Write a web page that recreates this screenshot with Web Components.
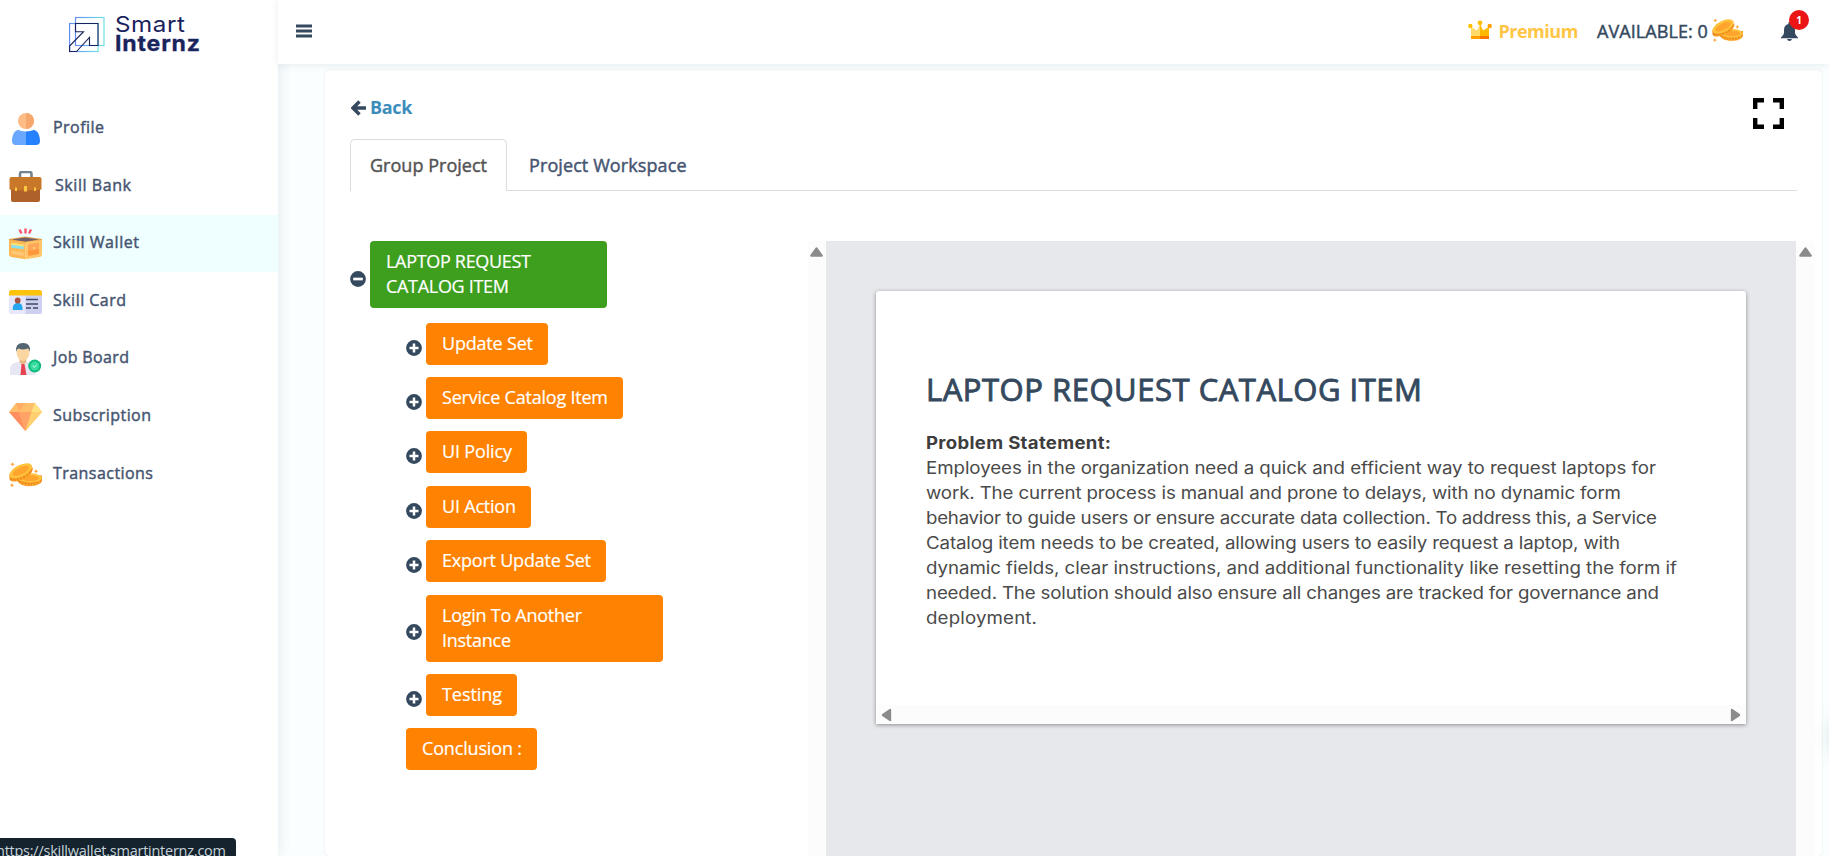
<!DOCTYPE html>
<html lang="en"><head><meta charset="utf-8"><title>Smart Internz</title>
<style>
html,body{margin:0;height:856px;overflow:hidden;background:#fff}
body{font-family:"Open Sans","Noto Sans",sans-serif;color:#34495e}
</style></head><body>
<skill-app></skill-app>
<script>
const define=(name,css,html,ready)=>customElements.define(name,class extends HTMLElement{
  connectedCallback(){
    if(this.shadowRoot)return;
    const t=document.createElement('template');
    t.innerHTML=`<style>*{box-sizing:border-box}${css}</style>${typeof html==='function'?html(this):html}`;
    this.attachShadow({mode:'open'}).append(t.content.cloneNode(true));
    if(ready)ready(this);
  }
});

/* One line of text, tracked so that it fills the width given in w; stretch widens the glyphs first. */
define('fit-line',':host{display:block;white-space:nowrap;width:max-content}span{display:inline-block;transform-origin:0 50%}','<span><slot></slot></span>',el=>{
  const s=el.shadowRoot.querySelector('span'),k=+(el.getAttribute('stretch')||1),w=+el.getAttribute('w')/k,n=el.textContent.length;
  s.style.letterSpacing=((w-s.getBoundingClientRect().width)/(n-1))+'px';
  if(k!==1)s.style.transform=`scaleX(${k})`;
});

const coins=`<svg viewBox="0 0 33 26"><g><path d="M9 13.5h24v5.2q-1 4.600-12 5.300-10.500-.3-12.200-4.800z" fill="#f18b1c"/><path d="M12 20v2m3-1v2.500m3-2v3m3-3v3m3-3v2.600m3-3.500v3m3-5v3.500" stroke="#ffb632" stroke-width="1.200"/><ellipse cx="21" cy="16" rx="12" ry="4.700" fill="#ffc23d"/><ellipse cx="21" cy="16.200" rx="9" ry="2.900" fill="#ffa52d"/><path d="M.3 12.500l.3 5c1 2.400 7 3 14-1 7-3.500 9.500-7 9.200-11z" fill="#f18b1c"/><path d="M4 17.500v2m3-2.200.5 2m2.500-3 1 2.400m2-4 1 2.300m2-4.200 1.200 2m1.400-4 1.200 1.600" stroke="#ffb632" stroke-width="1.200"/><ellipse cx="11.800" cy="8.800" rx="12.300" ry="5.900" transform="rotate(-27 11.800 8.800)" fill="#ffc23d"/><ellipse cx="11.800" cy="8.900" rx="9" ry="3.500" transform="rotate(-27 11.800 8.900)" fill="#ffa52d"/><path d="M3.500.2l.7 1.400 1.500.7-1.500.7-.7 1.500-.7-1.500-1.500-.7 1.500-.7zM27 7l.7 1.500 1.500.7-1.500.7-.7 1.500-.7-1.500-1.500-.7 1.500-.7zM3 21l.7 1.500 1.500.7-1.500.7L3 25.400l-.7-1.500-1.500-.7 1.500-.7z" fill="#ffa23a"/></g></svg>`;
const icons={
profile:`<svg viewBox="0 0 28 32"><path d="M14 16C11 14.500 6 16 3.500 18.200 1 20 0 25 0 28q0 4 4 4h10z" fill="#6aa7ff"/><path d="M14 16c3-1.500 8 0 10.500 2.200C27 20 28 25 28 28q0 4-4 4H14z" fill="#2681ff"/><path d="M5 16.500Q14 12 23 16.500 14 20.500 5 16.500" fill="#fff"/><circle cx="14" cy="8" r="8" fill="#ffbb85"/><path d="M14 0a8 8 0 0 1 0 16z" fill="#f6a76c"/></svg>`,
bank:`<svg viewBox="0 0 33 31"><path d="M11 7V3q0-2 2-2h7.500q2 0 2 2v4" fill="none" stroke="#75838e" stroke-width="2.600"/><path d="M2 16h29v13q0 2-2 2H4q-2 0-2-2z" fill="#ae6128"/><path d="M2.500 6h28q2 0 2 2v10.500q-10 1-16 1T.5 18.500V8q0-2 2-2z" fill="#c87828"/><path d="M6 16.500h2v3.500H6zm9-1.500h3v5.500h-3zm10 1.500h2v3.500h-2z" fill="#ffc73e"/></svg>`,
wallet:`<svg viewBox="0 0 33 32"><path d="M10.500 1.500l2 4m4-5v5m5.500-4-2 4" stroke="#ff5364" stroke-width="2.300"/><path d="M0 11l16-2.500L33 11v3L16 16 0 14z" fill="#e6a04b"/><path d="M3 11.500l13-2 14 2-14 2.200z" fill="#71606a"/><path d="M0 12l16.500 2v17.200L2 29Q0 28.500 0 26z" fill="#ffb755"/><path d="M16.500 14L33 12v14q0 2.500-2 3l-14.500 2.200z" fill="#ffc568"/><path d="M2.300 15.500l12.400 1.600v4.200L2.300 19.700z" fill="#89e0ef"/><path d="M2.300 14.800l12.400 1.600v2L2.300 16.700z" fill="#ffe36e"/><path d="M2.500 22.500l12 1.800V28l-12-2z" fill="#ffc879"/><path d="M19 17.500q0-1.200 1.500-1.400l9.500-1.400v11l-9.500 2q-1.500-.1-1.500-2z" fill="#ffa65a"/><path d="M19 22q5 1.500 11-1v4.700l-9.500 2q-1.500-.1-1.500-2z" fill="#ff9838"/><circle cx="25" cy="20" r="1" fill="#ffe36e"/></svg>`,
card:`<svg viewBox="0 0 33 24"><rect width="33" height="24" rx="2.500" fill="#e6e7fa"/><path d="M16.500 5H33v17q0 2-2.500 2h-14z" fill="#cfcff2"/><path d="M2.500 0h28Q33 0 33 2.500V5.500H0V2.500Q0 0 2.500 0z" fill="#ffc20d"/><path d="M3.800 20v-2.500q.5-4.500 5-4.500t4.700 4.500V20z" fill="#26a6ef"/><circle cx="8.700" cy="10.500" r="2.900" fill="#ab5140"/><path d="M17 9.500h12M17 14h12M17 18h5m2 0h5" stroke="#3f4d62" stroke-width="1.700"/></svg>`,
job:`<svg viewBox="0 0 33 32"><path d="M1 32v-7q1-5.500 9-6h7q8 .6 9.500 6v7z" fill="#e6e7f2"/><path d="M10.500 14h6.800v5.500l-3.400 2.300-3.400-2.300z" fill="#e9b985"/><path d="M7.500 9q0-6 6.500-6t6.500 6q0 7-6.500 9-6.500-2-6.500-9z" fill="#fbd5a2"/><path d="M7 9Q6 0 14 0t7 9q-1-3.500-2.500-3.500-4.500 2-9 0Q7.500 6 7 9z" fill="#526674"/><path d="M12.500 21h3l2 11h-6z" fill="#e64350"/><circle cx="25.700" cy="23" r="6.500" fill="#13ba7c"/><circle cx="25.700" cy="23" r="4.500" fill="#35dca0"/><path d="M23.700 23l1.500 1.300 2.500-2.400" fill="none" stroke="#fff" stroke-width=".9"/></svg>`,
gem:`<svg viewBox="0 0 33 28"><path d="M7 0h19l7 9-16.500 19L0 9z" fill="#ffbf69"/><path d="M0 9h10l6.500 19z" fill="#ff8f61"/><path d="M10 9h12.500l-6 19z" fill="#ffa466"/><path d="M22.500 9H33L16.500 28z" fill="#ffd070"/><path d="M7 0l3 9 6.500-9z" fill="#ffac65"/><path d="M26 0l-3.500 9L33 9z" fill="#ffe27f"/></svg>`,
coins};
const mark={
plus:`<svg width="16" height="16" viewBox="0 0 16 16"><circle cx="8" cy="8" r="7.900" fill="#34495e"/><path d="M8 3.500v9M3.500 8h9" stroke="#fff" stroke-width="2.500"/></svg>`,
minus:`<svg width="16" height="16" viewBox="0 0 16 16"><circle cx="8" cy="8" r="7.900" fill="#34495e"/><path d="M3.200 8h9.600" stroke="#fff" stroke-width="2.700"/></svg>`};

define('nav-item',`:host{display:flex;height:57.600px;align-items:center;padding-left:9px;font-size:16px;-webkit-text-stroke:.45px;color:#465571;line-height:24px}
 :host([active]){background:#efffff}
 i{display:flex;width:33px;height:33px;justify-content:center;align-items:center;margin:1.400px 11px 0 0}
 fit-line{margin-top:-2.800px}svg{display:block}`,
 e=>{const k=e.getAttribute('icon'),s={profile:[28,32],bank:[33,31],wallet:[33,32],card:[33,24],job:[33,32],gem:[33,28],coins:[33,26]}[k];
 return `<i>${icons[k].replace('<svg','<svg width="'+s[0]+'" height="'+s[1]+'"')}</i><fit-line w="${e.getAttribute('w')}" style="padding-left:${k==='bank'?2:0}px">${e.getAttribute('label')}</fit-line>`});

define('brand-logo',`:host{display:flex;height:99.600px;padding:16px 0 0 69px}svg{margin-right:10px;flex:none}
 .n{font:400 22px/18px Inter,sans-serif;color:#1a245c;margin-top:-1px}b{font-weight:700;-webkit-text-stroke:.3px}fit-line{height:18px}.s{margin-bottom:1px}`,
 `<svg width="36" height="37" viewBox="0 0 36 37" fill="none"><defs><linearGradient id="g"><stop stop-color="#648cf5"/><stop offset="1" stop-color="#70e0e4"/></linearGradient></defs><rect x="6.500" y="1.500" width="28.500" height="28" stroke="url(#g)" stroke-width="1.200"/><rect x=".6" y="7.500" width="28.500" height="28" stroke="url(#g)" stroke-width="1.200"/><path d="M6.500 15.700V7.500H29v22h-8.500V21.300L7.500 35.500H.6V30L14.500 15.700z" stroke="#1a245c" stroke-width="1.100"/></svg>
 <div class="n"><fit-line class="s" w="70" stretch="1.1">Smart</fit-line><fit-line w="85" stretch="1.050"><b>Internz</b></fit-line></div>`);

define('side-bar',`:host{display:block;width:278px;background:#fff;box-shadow:0 0 14px rgba(50,80,90,.12);z-index:1}`,
 `<brand-logo></brand-logo><nav>
 <nav-item icon="profile" label="Profile" w="51"></nav-item>
 <nav-item icon="bank" label="Skill Bank" w="76"></nav-item>
 <nav-item icon="wallet" label="Skill Wallet" w="86" active></nav-item>
 <nav-item icon="card" label="Skill Card" w="73"></nav-item>
 <nav-item icon="job" label="Job Board" w="76"></nav-item>
 <nav-item icon="gem" label="Subscription" w="98"></nav-item>
 <nav-item icon="coins" label="Transactions" w="100"></nav-item></nav>`);

define('top-bar',`:host{display:flex;height:64px;background:#fff;align-items:center;padding:0 31px 2px 18px;font-size:18px;line-height:24px;position:relative;z-index:1;box-shadow:0 1px 8px rgba(50,80,90,.1)}
 .sp{flex:1}.p{color:#ffc645;font-weight:700;margin:0 19px 0 6px}.a{-webkit-text-stroke:.45px;margin-right:4px}svg{display:block}
 .bell{position:relative;margin:1px 0 0 38px}.badge{position:absolute;left:8px;top:-12px;width:20px;height:20px;border-radius:50%;background:#ec1515;color:#fff;font:700 10px/20px "Open Sans";text-align:center}`,
 `<svg width="16" height="14" viewBox="0 0 16 14" style="margin-top:-1px"><path d="M0 2h16M0 7h16M0 12h16" stroke="#34495e" stroke-width="2.800"/></svg><span class="sp"></span>
 <svg width="24" height="20" viewBox="0 0 24 20" style="margin-top:-3px"><path d="M3 7l6 3.500L12 4l3 6.500L21 7v12H3z" fill="#ffda68"/><path d="M12 4l3 6.500L21 7v12h-9z" fill="#ffb900"/><path d="M3 16h9v3H3z" fill="#ff9f00"/><path d="M12 16h9v3h-9z" fill="#fc7500"/><circle cx="2.300" cy="6" r="2.200" fill="#ffc000"/><circle cx="12" cy="2.800" r="2.400" fill="#ffc000"/><circle cx="21.700" cy="6" r="2.200" fill="#ffa000"/></svg>
 <fit-line class="p" w="80">Premium</fit-line><fit-line class="a" w="111">AVAILABLE: 0</fit-line>
 ${coins.replace('<svg','<svg width="31" height="25" style="margin-top:-2px"')}
 <span class="bell"><svg width="17" height="19" viewBox="0 0 17 19"><path d="M7.500 0h2v2Q14 3 14 8v3q.3 2.500 3 4.500v.8H0v-.8Q2.700 13.500 3 11V8q0-5 4.500-6zM6 17h5q-.5 2-2.500 2T6 17z" fill="#34495e"/></svg><span class="badge">1</span></span>`);

define('tree-row',`:host{display:flex;align-items:center;padding-left:56px;margin-bottom:12.400px}:host([root]){padding-left:0;margin-bottom:14.600px}
 i{display:block;width:20px;height:16px;margin-top:8px}svg{display:block}
 div{background:#ff8300;color:#fff;border-radius:4px;padding:8px 16px 9px;font-size:18px;line-height:25px;-webkit-text-stroke:.2px}
 :host([root]) div{background:#3e9f1f}`,
 e=>{const m=e.getAttribute('mark'),w=e.getAttribute('ws').split(','),t=e.getAttribute('label').split('|');
 return `${m?'<i>'+mark[m]+'</i>':''}<div style="width:${e.getAttribute('box')}px">${t.map((x,i)=>`<fit-line w="${w[i]}">${x}</fit-line>`).join('')}</div>`});

define('project-tree',`:host{display:block;width:458px;flex:none}`,
 `<tree-row root mark="minus" label="LAPTOP REQUEST|CATALOG ITEM" ws="145,123" box="237"></tree-row>
 <tree-row mark="plus" label="Update Set" ws="91" box="122"></tree-row>
 <tree-row mark="plus" label="Service Catalog Item" ws="166" box="197"></tree-row>
 <tree-row mark="plus" label="UI Policy" ws="70" box="101"></tree-row>
 <tree-row mark="plus" label="UI Action" ws="74" box="105"></tree-row>
 <tree-row mark="plus" label="Export Update Set" ws="149" box="180"></tree-row>
 <tree-row mark="plus" label="Login To Another|Instance" ws="140,69" box="237"></tree-row>
 <tree-row mark="plus" label="Testing" ws="60" box="91"></tree-row>
 <tree-row label="Conclusion :" ws="100" box="131"></tree-row>`);

define('scroll-arrow',`:host{display:block;width:13px;height:10px}:host([dir=left]){transform:rotate(-90deg)}:host([dir=right]){transform:rotate(90deg)}svg{display:block}`,
 `<svg width="13" height="10" viewBox="0 0 13 10"><path d="M6.500 1.400L11.700 8.700H1.300z" fill="#8b8b8b" stroke="#8b8b8b" stroke-width="2.200" stroke-linejoin="round"/></svg>`);

define('doc-viewer',`:host{display:flex;height:615px}
 .sb{background:#fcfcfc;width:18px;padding:6px 0 0 2px}.sb.r{width:19px;padding-left:3px}
 .pane{width:970px;background:#e6e8ec;padding:50px 50px 0}
 article{width:870px;height:433px;background:#fff;border-radius:3px 3px 0 0;box-shadow:0 1px 4px rgba(0,0,0,.4);padding:73px 0 0 50px;display:flex;flex-direction:column}
 h1{margin:0;font-size:31px;line-height:50px;font-weight:400;-webkit-text-stroke:.9px}
 .body{font-family:Inter,sans-serif;font-size:17px;line-height:25px;color:#4a4a4a;margin-top:17px}
 .ps{font-weight:700;color:#3d3d3d}.txt{font-weight:400}
 .hs{margin:auto 0 0 -50px;height:19px;background:#fcfcfc;display:flex;justify-content:space-between;align-items:center;padding:0 4px}`,
 `<div class="sb"><scroll-arrow></scroll-arrow></div><div class="pane"><article><h1><fit-line w="496">LAPTOP REQUEST CATALOG ITEM</fit-line></h1>
 <div class="body"><fit-line class="ps" w="185" stretch="1.090">Problem Statement:</fit-line><div class="txt">
 <fit-line stretch="1.100" w="730">Employees in the organization need a quick and efficient way to request laptops for</fit-line>
 <fit-line stretch="1.100" w="695">work. The current process is manual and prone to delays, with no dynamic form</fit-line>
 <fit-line stretch="1.100" w="731">behavior to guide users or ensure accurate data collection. To address this, a Service</fit-line>
 <fit-line stretch="1.100" w="694">Catalog item needs to be created, allowing users to easily request a laptop, with</fit-line>
 <fit-line stretch="1.100" w="751">dynamic fields, clear instructions, and additional functionality like resetting the form if</fit-line>
 <fit-line stretch="1.100" w="733">needed. The solution should also ensure all changes are tracked for governance and</fit-line>
 <fit-line stretch="1.100" w="111">deployment.</fit-line></div></div>
 <div class="hs"><scroll-arrow dir="left"></scroll-arrow><scroll-arrow dir="right"></scroll-arrow></div></article></div><div class="sb r"><scroll-arrow></scroll-arrow></div>`);

define('tab-strip',`:host{display:flex;height:52px;width:1447px;border-bottom:1px solid #dcdcdc;font-size:18px;line-height:24px;-webkit-text-stroke:.45px;color:#465571}
 .on{color:#555;background:#fff;border:1px solid #dcdcdc;border-bottom:0;border-radius:5px 5px 0 0;height:52px;width:157px;padding:13px 0 0 19px}
 .off{padding:14px 0 0 22px}`,
 `<div class="on"><fit-line w="117">Group Project</fit-line></div><div class="off"><fit-line w="157.500">Project Workspace</fit-line></div>`);

define('work-card',`:host{display:block;width:1497px;height:786px;margin:6px 0 0 47px;background:#fff;border-radius:5px;box-shadow:0 0 2px rgba(50,80,90,.14);padding:25px 0 0 25px}
 .top{display:flex;height:44px;font-size:18px;font-weight:700;line-height:24px;color:#3c8dbc;align-items:flex-start}.top svg{display:block}
 .sp{flex:1}.row{display:flex;margin-top:50px}`,
 `<div class="top"><svg width="16" height="16" viewBox="0 0 16 16" style="margin:5px 3.500px 0 .5px"><path d="M8.500 1.500L2 8l6.500 6.500M2 8h13" fill="none" stroke="#34495e" stroke-width="3.400"/></svg><fit-line w="42.500">Back</fit-line><span class="sp"></span>
 <svg width="31" height="31" viewBox="0 0 31 31" style="margin:3px 38px 0 0"><path d="M2.200 11V2.200H11M20 2.200h8.800V11M28.800 20v8.800H20M11 28.800H2.200V20" fill="none" stroke="#000" stroke-width="4.400"/></svg></div>
 <tab-strip></tab-strip><div class="row"><project-tree></project-tree><doc-viewer></doc-viewer></div>`);

define('link-status',`:host{position:absolute;left:0;top:838px;width:236px;height:18px;overflow:hidden;background:#14232e;border-radius:0 4px 0 0;color:#c7d3da;font-size:14.500px;line-height:20px;z-index:3}fit-line{margin:3px 0 0 -4px}`,
 `<fit-line w="230">https://skillwallet.smartinternz.com</fit-line>`);

/* Soft shadow of the chat launcher, which sits just past the right edge. */
define('edge-glow',`:host{position:absolute;left:1830px;top:714px;width:46px;height:46px;border-radius:50%;box-shadow:0 0 18px rgba(40,60,70,.16);z-index:2}`,'');

define('skill-app',`:host{display:flex;position:relative;width:1829px;height:856px;overflow:hidden}main{width:1551px;background:#fafeff}`,
 `<side-bar></side-bar><main><top-bar></top-bar><work-card></work-card></main><edge-glow></edge-glow><link-status></link-status>`);
</script></body></html>
